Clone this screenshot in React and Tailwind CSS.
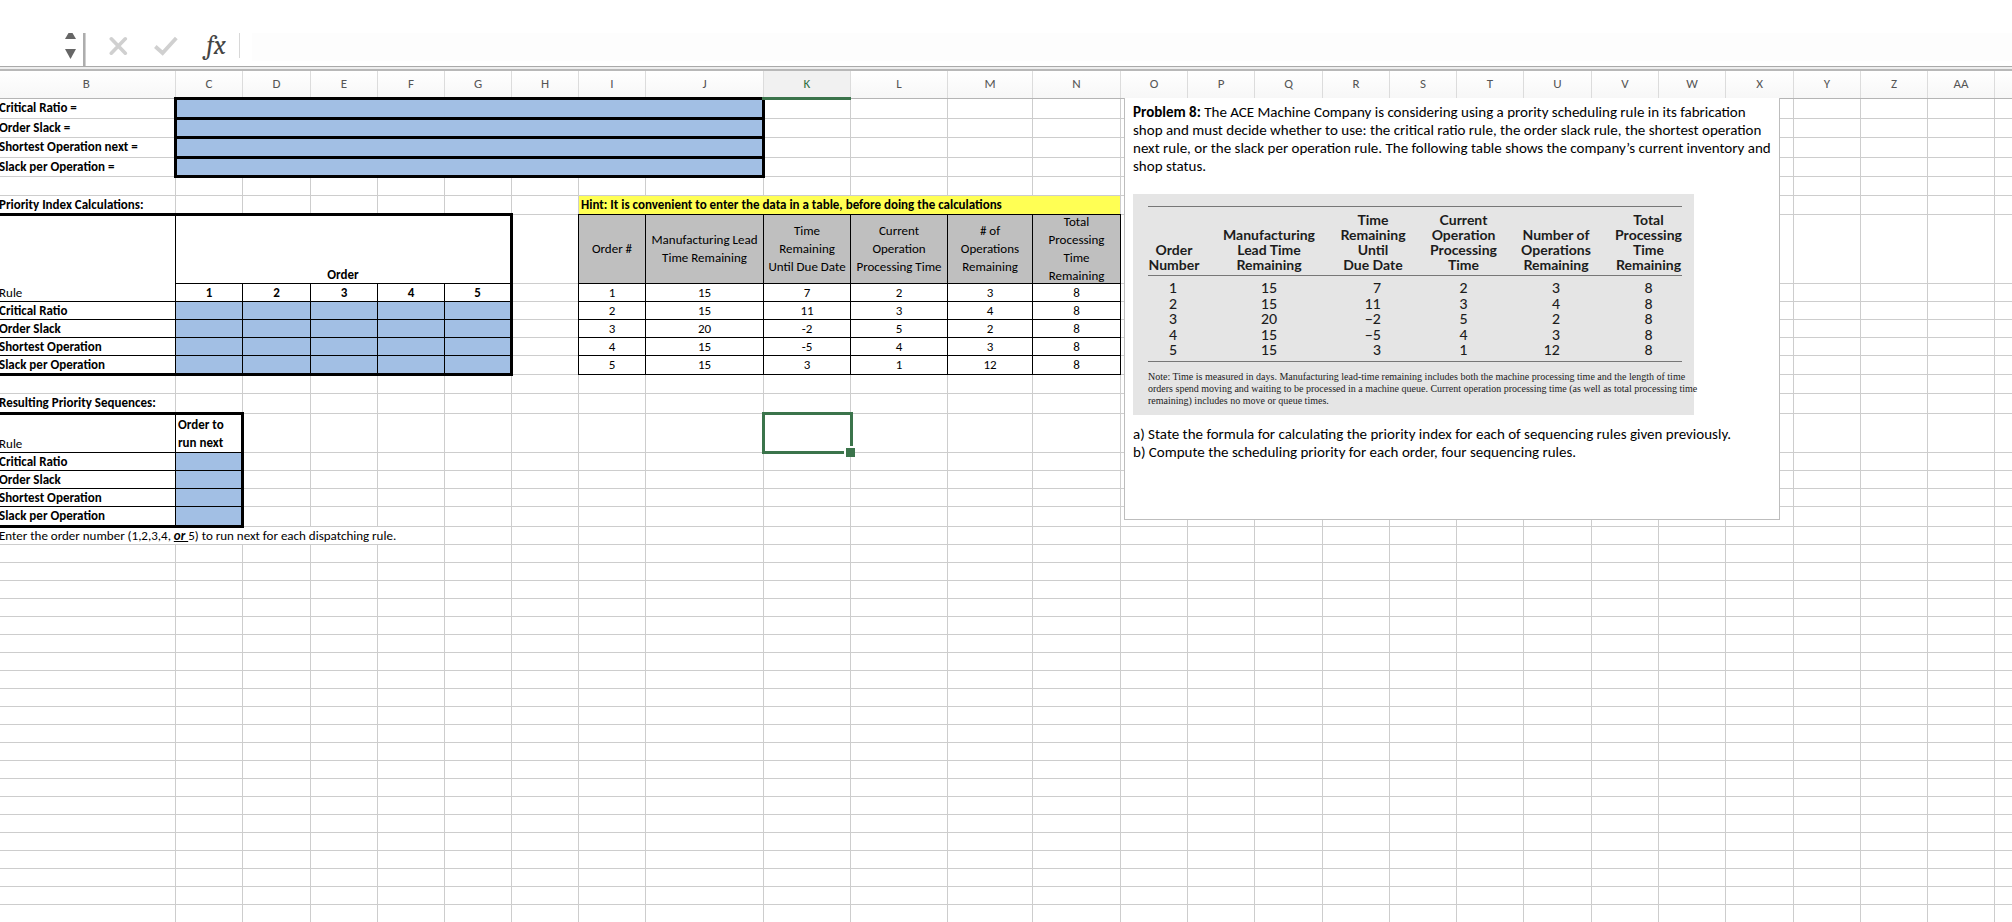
import React, { useState } from 'react';

const COLUMNS = [
    { id: 'B', width: 'w-[178px]' },
    { id: 'C', width: 'w-[67px]' },
    { id: 'D', width: 'w-[68px]' },
    { id: 'E', width: 'w-[67px]' },
    { id: 'F', width: 'w-[67px]' },
    { id: 'G', width: 'w-[67px]' },
    { id: 'H', width: 'w-[67px]' },
    { id: 'I', width: 'w-[67px]' },
    { id: 'J', width: 'w-[118px]' },
    { id: 'K', width: 'w-[87px]' },
    { id: 'L', width: 'w-[97px]' },
    { id: 'M', width: 'w-[85px]' },
    { id: 'N', width: 'w-[88px]' },
    { id: 'O', width: 'w-[67px]' },
    { id: 'P', width: 'w-[67px]' },
    { id: 'Q', width: 'w-[68px]' },
    { id: 'R', width: 'w-[67px]' },
    { id: 'S', width: 'w-[67px]' },
    { id: 'T', width: 'w-[67px]' },
    { id: 'U', width: 'w-[68px]' },
    { id: 'V', width: 'w-[67px]' },
    { id: 'W', width: 'w-[67px]' },
    { id: 'X', width: 'w-[68px]' },
    { id: 'Y', width: 'w-[67px]' },
    { id: 'Z', width: 'w-[67px]' },
    { id: 'AA', width: 'w-[67px]' },
    { id: '', width: '' },
];

const ROW_COUNT = 41;

// rows are 18px unless listed here
const ROW_HEIGHTS = {
    1: 'h-5',
    2: 'h-[19px]',
    3: 'h-5',
    4: 'h-[19px]',
    5: 'h-[19px]',
    6: 'h-[19px]',
    7: 'h-[69px]',
    12: 'h-[19px]',
    13: 'h-[19px]',
    14: 'h-5',
    15: 'h-[39px]',
    19: 'h-5',
};

// double wins over solid when borders collapse, and at 1px it draws as a plain line
const THIN = 'border border-double border-black';
const BLUE = 'bg-[#a2bfe4]';
const LABEL = 'pl-px text-left font-bold';

const RULES = ['Critical Ratio', 'Order Slack', 'Shortest Operation', 'Slack per Operation'];

const ORDERS = [
    [1, 15, 7, 2, 3, 8],
    [2, 15, 11, 3, 4, 8],
    [3, 20, -2, 5, 2, 8],
    [4, 15, -5, 4, 3, 8],
    [5, 15, 3, 1, 12, 8],
];

const buildCells = () => {
    const cells = {};

    // formula answers
    ['Critical Ratio =', 'Order Slack =', 'Shortest Operation next =', 'Slack per Operation ='].forEach((label, i) => {
        cells[`B${i + 1}`] = { text: label, className: LABEL };
        cells[`C${i + 1}`] = { colSpan: 8, className: `border-3 border-solid border-black ${BLUE}` };
    });

    // priority index table
    cells.B6 = { text: 'Priority Index Calculations:', className: `${LABEL} pt-px` };
    cells.B7 = { text: 'Rule', rowSpan: 2, className: `${THIN} border-t-3 border-t-black pl-px text-left align-bottom [border-top-style:solid]` };
    cells.C7 = { text: 'Order', colSpan: 5, className: `${THIN} border-t-3 border-r-3 text-center align-bottom font-bold [border-top-style:solid] [border-right-style:solid]` };
    ['C', 'D', 'E', 'F', 'G'].forEach((col, i) => {
        const right = col === 'G' ? 'border-r-3 [border-right-style:solid]' : '';
        cells[`${col}8`] = { text: i + 1, className: `${THIN} ${right} pt-px text-center font-bold` };
        for (let row = 9; row <= 12; row++) {
            const bottom = row === 12 ? 'border-b-3 [border-bottom-style:solid]' : '';
            cells[`${col}${row}`] = { className: `${THIN} ${right} ${bottom} ${BLUE}` };
        }
    });
    RULES.forEach((rule, i) => {
        const bottom = i === 3 ? 'border-b-3 [border-bottom-style:solid]' : '';
        cells[`B${i + 9}`] = { text: rule, className: `${THIN} ${bottom} ${LABEL} pt-px` };
        cells[`B${i + 16}`] = { text: rule, className: `${THIN} ${bottom} ${LABEL} pt-px` };
        cells[`C${i + 16}`] = { className: `${THIN} ${bottom} border-r-3 [border-right-style:solid] ${BLUE}` };
    });

    // order data
    cells.I6 = { text: 'Hint: It is convenient to enter the data in a table, before doing the calculations', colSpan: 6, className: 'border-[#ffff54] bg-[#ffff54] pt-px pl-0.5 text-left font-bold' };
    const headings = [
        ['Order #'],
        ['Manufacturing Lead', 'Time Remaining'],
        ['Time', 'Remaining', 'Until Due Date'],
        ['Current', 'Operation', 'Processing Time'],
        ['# of', 'Operations', 'Remaining'],
        ['Total', 'Processing', 'Time', 'Remaining'],
    ];
    ['I', 'J', 'K', 'L', 'M', 'N'].forEach((col, i) => {
        cells[`${col}7`] = { lines: headings[i], className: `${THIN} bg-[#bfbfbf] text-center` };
        ORDERS.forEach((order, j) => {
            cells[`${col}${j + 8}`] = { text: order[i], className: `${THIN} pt-px text-center` };
        });
    });

    // resulting sequences
    cells.B14 = { text: 'Resulting Priority Sequences:', className: LABEL };
    cells.B15 = { text: 'Rule', className: `${THIN} border-t-3 pl-px text-left align-bottom [border-top-style:solid]` };
    cells.C15 = { lines: ['Order to', 'run next'], className: `${THIN} border-t-3 border-r-3 pt-px pl-0.5 text-left font-bold [border-top-style:solid] [border-right-style:solid]` };
    cells.B20 = {
        text: (
            <>
                Enter the order number (1,2,3,4, <b className="italic underline">or </b> 5) to run next for each dispatching rule.
            </>
        ),
        colSpan: 5,
        className: 'pl-px text-left',
    };

    return cells;
};

const CELLS = buildCells();

// marks every position that a merged cell covers
const COVERED = new Set();
Object.entries(CELLS).forEach(([key, cell]) => {
    const col = COLUMNS.findIndex((c) => c.id === key[0]);
    const row = Number(key.slice(1));
    for (let r = 0; r < (cell.rowSpan || 1); r++) {
        for (let c = 0; c < (cell.colSpan || 1); c++) {
            if (r || c) COVERED.add(`${COLUMNS[col + c].id}${row + r}`);
        }
    }
});

const FormulaBar = () => {
    const [value, setValue] = useState('');

    return (
        <div className="flex h-[33px] shrink-0 items-start">
            <button type="button" aria-label="Name box" className="ml-[65px] h-[26px] w-[11px]">
                <svg viewBox="0 0 11 26" className="h-[26px] w-[11px]" fill="#666">
                    <path d="M3.5 0h4L11 6H0z" />
                    <path d="M0 16h11l-5.5 10z" />
                </svg>
            </button>
            <div className="ml-[7px] h-full w-[3px] border-r border-[#d0d0d0] bg-[#adadad]" />
            <button type="button" aria-label="Cancel" className="mt-[3px] ml-[23px] h-5 w-[19px]">
                <svg viewBox="0 0 19 20" className="h-5 w-[19px]" fill="none" stroke="#d0d0d0" strokeWidth="3.6" strokeLinecap="round">
                    <path d="M2.3 2.8l14 14.4M16.3 2.8l-14 14.4" />
                </svg>
            </button>
            <button type="button" aria-label="Enter" className="mt-[3px] ml-[26px] h-5 w-6">
                <svg viewBox="0 0 24 20" className="h-5 w-6" fill="none" stroke="#d0d0d0" strokeWidth="3.8">
                    <path d="M1.3 10.5l7.3 6.5L22.3 2" />
                </svg>
            </button>
            <button type="button" aria-label="Insert function" className="ml-[24px] h-[26px] w-[28px] font-['Caladea','Liberation_Serif',serif] text-[27px] leading-[24px] text-[#444] italic">
                fx
            </button>
            <div className="ml-[9px] h-[25px] w-px bg-[#d8d8d8]" />
            <input
                type="text"
                aria-label="Formula"
                value={value}
                onChange={(e) => setValue(e.target.value)}
                className="ml-3 h-7 min-w-0 flex-1 bg-[#fdfdfd] px-2 text-sm outline-none"
            />
        </div>
    );
};

const Cell = ({ id }) => {
    const cell = CELLS[id];

    if (id === 'K15') {
        return (
            <td className="relative border border-[#cdcdcd] p-0">
                <div className="absolute -top-[2px] -right-[3px] -bottom-[2px] -left-[2px] border-3 border-[#3b744b]" />
                <div className="absolute -right-[5px] -bottom-[5px] size-[11px] border-t-2 border-l-2 border-white bg-[#3b744b]" />
            </td>
        );
    }
    if (!cell) return <td className="border border-[#cdcdcd] p-0" />;

    const border = cell.className.includes('border') ? '' : 'border border-[#cdcdcd]';
    return (
        <td colSpan={cell.colSpan} rowSpan={cell.rowSpan} className={`${border} p-0 whitespace-nowrap ${cell.className}`}>
            {cell.lines ? (
                <div className="flex max-h-[67px] flex-col justify-center leading-[18px]">
                    {cell.lines.map((line) => (
                        <span key={line}>{line}</span>
                    ))}
                </div>
            ) : (
                cell.text
            )}
        </td>
    );
};

const STATUS_COLUMNS = [
    { lines: ['Order', 'Number'], head: 'w-[74px] pr-[22px]', cell: 'pr-[24px] text-center' },
    { lines: ['Manufacturing', 'Lead Time', 'Remaining'], head: 'w-[94px]', cell: 'text-center' },
    { lines: ['Time', 'Remaining', 'Until', 'Due Date'], head: 'w-[114px]', cell: 'pr-[49px] text-right' },
    { lines: ['Current', 'Operation', 'Processing', 'Time'], head: 'w-[67px]', cell: 'text-center' },
    { lines: ['Number of', 'Operations', 'Remaining'], head: 'w-[118px]', cell: 'pr-[55px] text-right' },
    { lines: ['Total', 'Processing', 'Time', 'Remaining'], head: 'w-[67px]', cell: 'text-center' },
];

const StatusTable = () => (
    <div className="mt-[19px] w-[561px] bg-[#e5e5e5] px-[15px] pt-3 pb-2 text-[#1c1c1c]">
        <table className="w-[534px] table-fixed border-y border-[#777] font-['Lato',sans-serif] text-sm leading-[15px]">
            <thead>
                <tr className="h-[69px] border-b border-[#777]">
                    {STATUS_COLUMNS.map((col) => (
                        <th key={col.lines.join(' ')} className={`p-0 pb-[3px] align-bottom font-bold whitespace-nowrap ${col.head}`}>
                            <span className="flex flex-col items-center">
                                {col.lines.map((line) => (
                                    <span key={line}>{line}</span>
                                ))}
                            </span>
                        </th>
                    ))}
                </tr>
            </thead>
            <tbody className="font-medium">
                <tr className="h-1" />
                {ORDERS.map((order) => (
                    <tr key={order[0]} className="odd:h-[15px] even:h-4">
                        {order.map((value, i) => (
                            <td key={i} className={`p-0 ${STATUS_COLUMNS[i].cell}`}>
                                {String(value).replace('-', '−')}
                            </td>
                        ))}
                    </tr>
                ))}
                <tr className="h-1" />
            </tbody>
        </table>
        <p className="mt-[9px] font-['Liberation_Serif',serif] text-[10px] leading-3 whitespace-nowrap">
            Note: Time is measured in days. Manufacturing lead-time remaining includes both the machine processing time and the length of time
            <br />
            orders spend moving and waiting to be processed in a machine queue. Current operation processing time (as well as total processing time
            <br />
            remaining) includes no move or queue times.
        </p>
    </div>
);

// text box that floats over the sheet
const ProblemBox = () => (
    <div className="absolute top-[27px] left-[1124px] w-[656px] border border-t-0 border-[#bdbdbd] bg-white pt-[5px] pb-[58px] pl-2 text-[15px] leading-[18px]">
        <p className="whitespace-nowrap">
            <b>Problem 8:</b> The ACE Machine Company is considering using a prority scheduling rule in its fabrication
            <br />
            shop and must decide whether to use: the critical ratio rule, the order slack rule, the shortest operation
            <br />
            next rule, or the slack per operation rule. The following table shows the company’s current inventory and
            <br />
            shop status.
        </p>
        <StatusTable />
        <p className="mt-[10px]">a) State the formula for calculating the priority index for each of sequencing rules given previously.</p>
        <p>b) Compute the scheduling priority for each order, four sequencing rules.</p>
    </div>
);

const Sheet = () => (
    <div className="relative min-h-0 flex-1 overflow-hidden">
        <div className="-mr-1 -ml-[3px]">
            <table className="w-full table-fixed border-collapse text-[13px] leading-4">
                <thead>
                    <tr className="h-[27px] bg-gradient-to-b from-white to-[#f7f7f7]">
                        {COLUMNS.map((col) => (
                            <th
                                key={col.id}
                                scope="col"
                                className={`border-r border-r-[#dcdcdc] p-0 font-normal ${col.width} ${
                                    col.id === 'K' ? 'border-b-3 border-b-[#3b744b] bg-[#f1f1f1] text-[#2f7044]' : 'border-b border-b-[#b5b5b5] text-[#555]'
                                }`}
                            >
                                {col.id}
                            </th>
                        ))}
                    </tr>
                </thead>
                <tbody>
                    {Array.from({ length: ROW_COUNT }, (_, i) => i + 1).map((row) => (
                        <tr key={row} className={ROW_HEIGHTS[row] || 'h-[18px]'}>
                            {COLUMNS.filter((col) => !COVERED.has(`${col.id}${row}`)).map((col) => (
                                <Cell key={col.id} id={`${col.id}${row}`} />
                            ))}
                        </tr>
                    ))}
                </tbody>
            </table>
        </div>
        <ProblemBox />
    </div>
);

const App = () => {
    return (
        <div className="flex h-screen flex-col overflow-hidden bg-white pt-[33px] font-['Carlito','Lato',sans-serif] text-black">
            <FormulaBar />
            <div className="h-[5px] shrink-0 border-t border-b-2 border-t-[#aaa] border-b-[#b8b8b8] bg-[#eee]" />
            <Sheet />
        </div>
    );
};

export default App;
